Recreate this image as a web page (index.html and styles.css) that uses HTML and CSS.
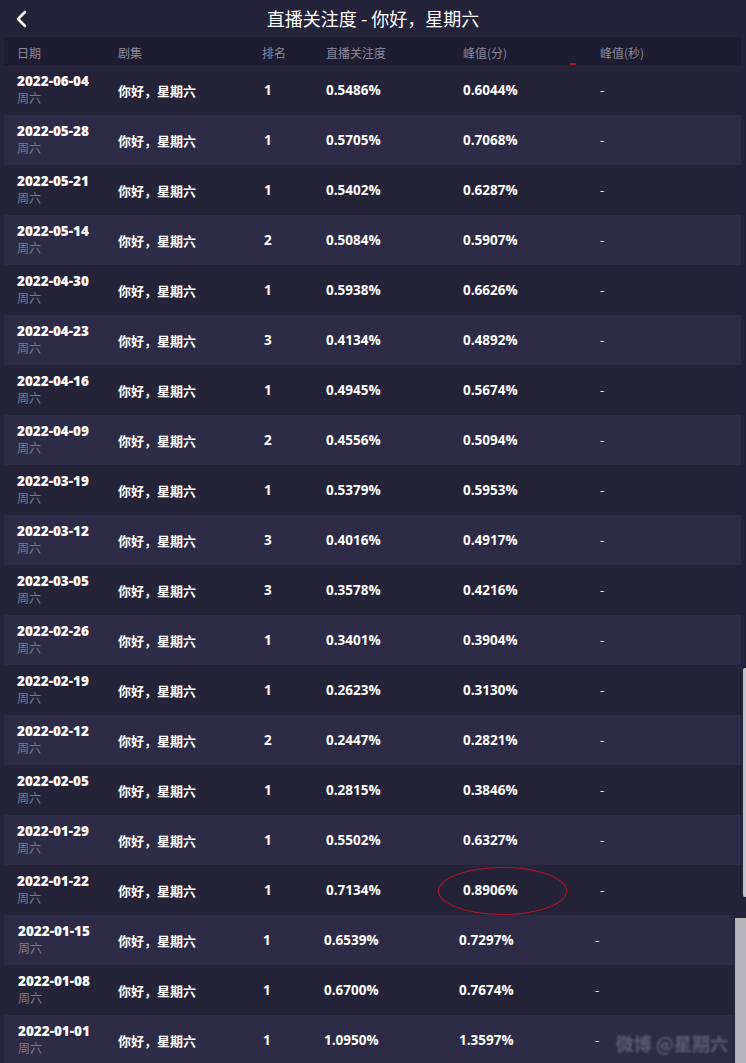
FILE: index.html
```html
<!DOCTYPE html>
<html lang="zh-CN">
<head>
  <meta charset="UTF-8">
  <title>直播关注度 - 你好，星期六</title>
  <meta name="viewport" content="width=device-width, initial-scale=1.0">
  <link rel="stylesheet" href="styles.css">
</head>
<body>
  <div class="topbar">
    <span class="back">
      <svg width="14" height="18" viewBox="0 0 14 18"><path d="M10 2 L3 9 L10 16" fill="none" stroke="#fff" stroke-width="2.6" stroke-linecap="round" stroke-linejoin="round"/></svg>
    </span>
    <h1>直播关注度 - 你好，星期六</h1>
    <span></span>
  </div>

  <div class="panel">
    <div class="thead">
      <span>日期</span>
      <span>剧集</span>
      <span>排名</span>
      <span>直播关注度</span>
      <span>峰值(分)</span>
      <span>峰值(秒)</span>
    </div>
    <span class="mark"></span>

    <div class="tbody">
      <div class="row"><div class="date"><b>2022-06-04</b><small>周六</small></div><span>你好，星期六</span><span>1</span><span>0.5486%</span><span>0.6044%</span><span class="dash">-</span></div>
      <div class="row"><div class="date"><b>2022-05-28</b><small>周六</small></div><span>你好，星期六</span><span>1</span><span>0.5705%</span><span>0.7068%</span><span class="dash">-</span></div>
      <div class="row"><div class="date"><b>2022-05-21</b><small>周六</small></div><span>你好，星期六</span><span>1</span><span>0.5402%</span><span>0.6287%</span><span class="dash">-</span></div>
      <div class="row"><div class="date"><b>2022-05-14</b><small>周六</small></div><span>你好，星期六</span><span>2</span><span>0.5084%</span><span>0.5907%</span><span class="dash">-</span></div>
      <div class="row"><div class="date"><b>2022-04-30</b><small>周六</small></div><span>你好，星期六</span><span>1</span><span>0.5938%</span><span>0.6626%</span><span class="dash">-</span></div>
      <div class="row"><div class="date"><b>2022-04-23</b><small>周六</small></div><span>你好，星期六</span><span>3</span><span>0.4134%</span><span>0.4892%</span><span class="dash">-</span></div>
      <div class="row"><div class="date"><b>2022-04-16</b><small>周六</small></div><span>你好，星期六</span><span>1</span><span>0.4945%</span><span>0.5674%</span><span class="dash">-</span></div>
      <div class="row"><div class="date"><b>2022-04-09</b><small>周六</small></div><span>你好，星期六</span><span>2</span><span>0.4556%</span><span>0.5094%</span><span class="dash">-</span></div>
      <div class="row"><div class="date"><b>2022-03-19</b><small>周六</small></div><span>你好，星期六</span><span>1</span><span>0.5379%</span><span>0.5953%</span><span class="dash">-</span></div>
      <div class="row"><div class="date"><b>2022-03-12</b><small>周六</small></div><span>你好，星期六</span><span>3</span><span>0.4016%</span><span>0.4917%</span><span class="dash">-</span></div>
      <div class="row"><div class="date"><b>2022-03-05</b><small>周六</small></div><span>你好，星期六</span><span>3</span><span>0.3578%</span><span>0.4216%</span><span class="dash">-</span></div>
      <div class="row"><div class="date"><b>2022-02-26</b><small>周六</small></div><span>你好，星期六</span><span>1</span><span>0.3401%</span><span>0.3904%</span><span class="dash">-</span></div>
      <div class="row"><div class="date"><b>2022-02-19</b><small>周六</small></div><span>你好，星期六</span><span>1</span><span>0.2623%</span><span>0.3130%</span><span class="dash">-</span></div>
      <div class="row"><div class="date"><b>2022-02-12</b><small>周六</small></div><span>你好，星期六</span><span>2</span><span>0.2447%</span><span>0.2821%</span><span class="dash">-</span></div>
      <div class="row"><div class="date"><b>2022-02-05</b><small>周六</small></div><span>你好，星期六</span><span>1</span><span>0.2815%</span><span>0.3846%</span><span class="dash">-</span></div>
      <div class="row"><div class="date"><b>2022-01-29</b><small>周六</small></div><span>你好，星期六</span><span>1</span><span>0.5502%</span><span>0.6327%</span><span class="dash">-</span></div>
      <div class="row"><div class="date"><b>2022-01-22</b><small>周六</small></div><span>你好，星期六</span><span>1</span><span>0.7134%</span><span class="circled">0.8906%</span><span class="dash">-</span></div>
    </div>
    <span class="scroll"></span>
  </div>

  <div class="panel panel-b">
    <div class="tbody">
      <div class="row"><div class="date"><b>2022-01-15</b><small>周六</small></div><span>你好，星期六</span><span>1</span><span>0.6539%</span><span>0.7297%</span><span class="dash">-</span></div>
      <div class="row"><div class="date"><b>2022-01-08</b><small>周六</small></div><span>你好，星期六</span><span>1</span><span>0.6700%</span><span>0.7674%</span><span class="dash">-</span></div>
      <div class="row"><div class="date"><b>2022-01-01</b><small>周六</small></div><span>你好，星期六</span><span>1</span><span>1.0950%</span><span>1.3597%</span><span class="dash">-</span></div>
    </div>
    <span class="scroll"></span>
    <span class="watermark">微博 @星期六</span>
  </div>
</body>
</html>
```

FILE: styles.css
```css
* {
  box-sizing: border-box;
}
body {
  margin: 0;
  width: 746px;
  height: 1063px;
  overflow: hidden;
  background: #25233a;
  color: #fff;
  font-family: "Open Sans", "Noto Sans CJK SC", sans-serif;
}
.topbar {
  height: 37px;
  display: grid;
  grid-template-columns: 40px 1fr 40px;
  align-items: center;
}
.back {
  display: flex;
  padding-left: 15px;
  padding-top: 1px;
}
.topbar h1 {
  margin: 0;
  text-align: center;
  font-family: "Noto Sans CJK SC", sans-serif;
  font-size: 18px;
  font-weight: 400;
  line-height: 37px;
}
.panel {
  position: relative;
  padding: 0 5px 0 4px;
}
.thead,
.row {
  display: grid;
  grid-template-columns: 101px 144px 64px 137px 137px 1fr;
  padding-left: 13px;
  align-items: center;
}
.thead {
  height: 28px;
  padding-top: 2px;
  background: #1e1c30;
  color: #8b899d;
  font-family: "Noto Sans CJK SC", sans-serif;
  font-size: 12px;
}
.row {
  height: 50px;
  background: #252338;
  font-size: 13.5px;
  font-weight: 700;
}
.row:nth-child(even) {
  background: #2d2b45;
}
.row > span:nth-child(2) {
  font-family: "Noto Sans CJK SC", sans-serif;
  font-size: 13px;
}
.row > span:nth-child(3) {
  padding-left: 2px;
}
.date {
  display: flex;
  flex-direction: column;
  align-self: start;
  padding-top: 7px;
}
.date b {
  font-size: 13.5px;
  line-height: 18px;
}
.date small {
  font-family: "Noto Sans CJK SC", sans-serif;
  font-size: 12px;
  font-weight: 400;
  line-height: 16px;
  color: #7b798e;
}
.dash {
  font-weight: 400;
}
.circled {
  position: relative;
}
.circled::after {
  content: "";
  position: absolute;
  left: -25px;
  top: -14px;
  width: 127px;
  height: 46px;
  border: 1.4px solid #b0152b;
  border-radius: 50%;
}
.mark {
  position: absolute;
  left: 570px;
  top: 26px;
  width: 6px;
  height: 2px;
  background: #a3152a;
}
.panel .scroll {
  position: absolute;
  right: 0;
  top: 631px;
  width: 3px;
  height: 229px;
  background: #c2c2ca;
  border-radius: 2px 0 0 2px;
}
.panel-b {
  padding: 0 13px 0 4px;
}
.panel-b .row {
  grid-template-columns: 100px 143px 63px 135px 136px 1fr;
  padding-left: 14px;
}
.panel-b .row:nth-child(odd) {
  background: #2d2b45;
}
.panel-b .row:nth-child(even) {
  background: #252338;
}
.panel-b .scroll {
  top: 3px;
  right: 0;
  width: 11px;
  height: 160px;
  background: #b3b3b8;
  border-radius: 0;
}
.watermark {
  position: absolute;
  right: 18px;
  top: 115px;
  font-family: "Noto Sans CJK SC", sans-serif;
  font-size: 18px;
  line-height: 26px;
  font-weight: 700;
  color: rgba(210, 210, 220, 0.3);
  filter: blur(1.2px);
}
```
